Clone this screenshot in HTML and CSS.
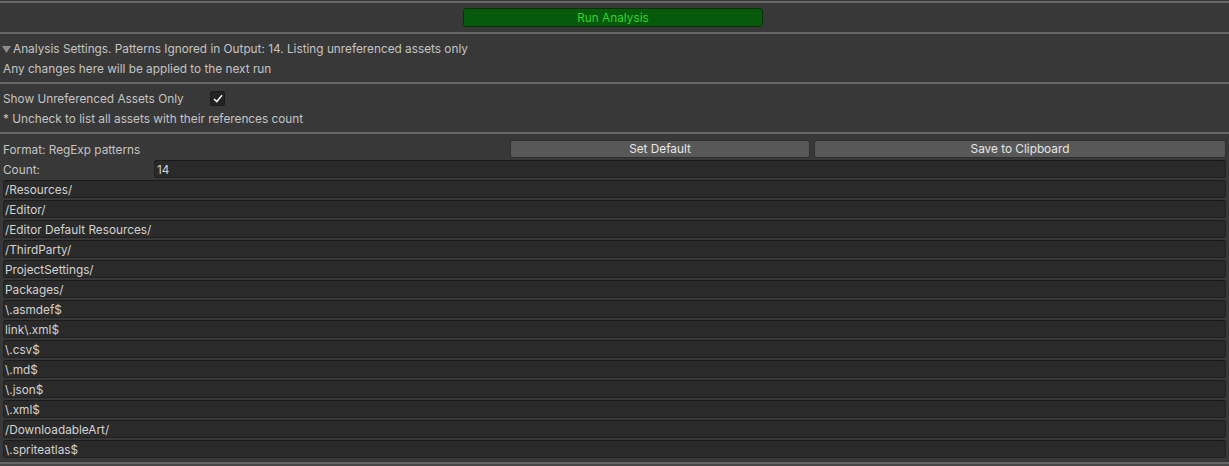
FILE: index.html
```html
<!DOCTYPE html>
<html>
<head>
<meta charset="utf-8">
<link rel="stylesheet" href="styles.css">
</head>
<body>
<div class="sep first"></div>
<div class="toolbar">
  <button class="run-btn">Run Analysis</button>
</div>
<div class="sep"></div>
<div class="section">
  <div class="line foldout">
    <svg class="tri" width="9" height="7" viewBox="0 0 9 7"><path d="M0 0 L9 0 L4.5 7 Z" fill="#8e8e8e"/></svg>
    <span>Analysis Settings. Patterns Ignored in Output: 14. Listing unreferenced assets only</span>
  </div>
  <div class="line">Any changes here will be applied to the next run</div>
</div>
<div class="sep"></div>
<div class="section">
  <div class="line toggle-row">
    <span class="toggle-label">Show Unreferenced Assets Only</span>
    <span class="checkbox">
      <svg width="10" height="9" viewBox="0 0 10 9"><path d="M1 5 L3.8 7.6 L9 1.2" stroke="#f0f0f0" stroke-width="1.6" fill="none"/></svg>
    </span>
  </div>
  <div class="line">* Uncheck to list all assets with their references count</div>
</div>
<div class="sep"></div>
<div class="list-section">
  <div class="row format-row">
    <span class="format-label">Format: RegExp patterns</span>
    <button class="btn btn-default">Set Default</button>
    <button class="btn btn-clip">Save to Clipboard</button>
  </div>
  <div class="row count-row">
    <span class="count-label">Count:</span>
    <div class="field count-field">14</div>
  </div>
  <div class="row"><div class="field">/Resources/</div></div>
  <div class="row"><div class="field">/Editor/</div></div>
  <div class="row"><div class="field">/Editor Default Resources/</div></div>
  <div class="row"><div class="field">/ThirdParty/</div></div>
  <div class="row"><div class="field">ProjectSettings/</div></div>
  <div class="row"><div class="field">Packages/</div></div>
  <div class="row"><div class="field">\.asmdef$</div></div>
  <div class="row"><div class="field">link\.xml$</div></div>
  <div class="row"><div class="field">\.csv$</div></div>
  <div class="row"><div class="field">\.md$</div></div>
  <div class="row"><div class="field">\.json$</div></div>
  <div class="row"><div class="field">\.xml$</div></div>
  <div class="row"><div class="field">/DownloadableArt/</div></div>
  <div class="row"><div class="field">\.spriteatlas$</div></div>
</div>
<div class="sep bottom"></div>
<div class="footer"></div>
</body>
</html>
```

FILE: styles.css
```css
html, body {
  margin: 0;
  padding: 0;
  background: #383838;
  height: 100%;
  overflow: hidden;
}
body {
  font-family: Inter, "Noto Sans", sans-serif;
  font-size: 11.8px;
  color: #c4c4c4;
}
.sep {
  height: 2px;
  background: #666666;
}
.sep.first {
  margin-top: 1px;
}
.toolbar {
  height: 29px;
  display: flex;
  align-items: center;
  justify-content: center;
}
.run-btn {
  width: 300px;
  height: 19px;
  margin-left: -3px;
  background: #075a0b;
  border: 1px solid #073307;
  border-radius: 3px;
  color: #30d130;
  font-family: Inter, "Noto Sans", sans-serif;
  font-size: 11.8px;
  padding: 0;
}
.section {
  padding: 4px 3px;
}
.line {
  height: 19px;
  padding-top: 1px;
  line-height: 20px;
  white-space: nowrap;
}
.foldout {
  display: flex;
  align-items: center;
  margin-left: -1px;
}
.tri {
  margin: 1px 2px 0 0;
}
.toggle-row {
  display: flex;
  align-items: center;
}
.toggle-label {
  width: 207px;
}
.checkbox {
  width: 13px;
  height: 13px;
  margin-top: -1px;
  background: #232323;
  border: 1px solid #1b1b1b;
  border-radius: 2px;
  display: flex;
  align-items: center;
  justify-content: center;
}
.list-section {
  padding: 6px 3px 0 3px;
  display: flex;
  flex-direction: column;
  gap: 2px;
}
.row {
  height: 18px;
  display: flex;
  align-items: center;
}
.format-label {
  flex: 1;
  padding-top: 1px;
}
.count-label {
  width: 151px;
  padding-top: 1px;
}
.btn {
  height: 18px;
  background: #585858;
  border: 1px solid #303030;
  border-radius: 3px;
  color: #e6e6e6;
  font-family: Inter, "Noto Sans", sans-serif;
  font-size: 11.8px;
  padding: 0;
}
.btn-default {
  width: 300px;
  margin-right: 4px;
}
.btn-clip {
  width: 412px;
}
.field {
  flex: 1;
  height: 18px;
  box-sizing: border-box;
  background: #2a2a2a;
  border: 1px solid #212121;
  border-top-color: #1a1a1a;
  border-radius: 3px;
  color: #d2d2d2;
  line-height: 18px;
  padding-left: 1px;
  white-space: nowrap;
}
.count-field {
  padding-left: 2px;
}
.sep.bottom {
  margin-top: 4px;
}
.footer {
  height: 10px;
  background: #474747;
}
```
